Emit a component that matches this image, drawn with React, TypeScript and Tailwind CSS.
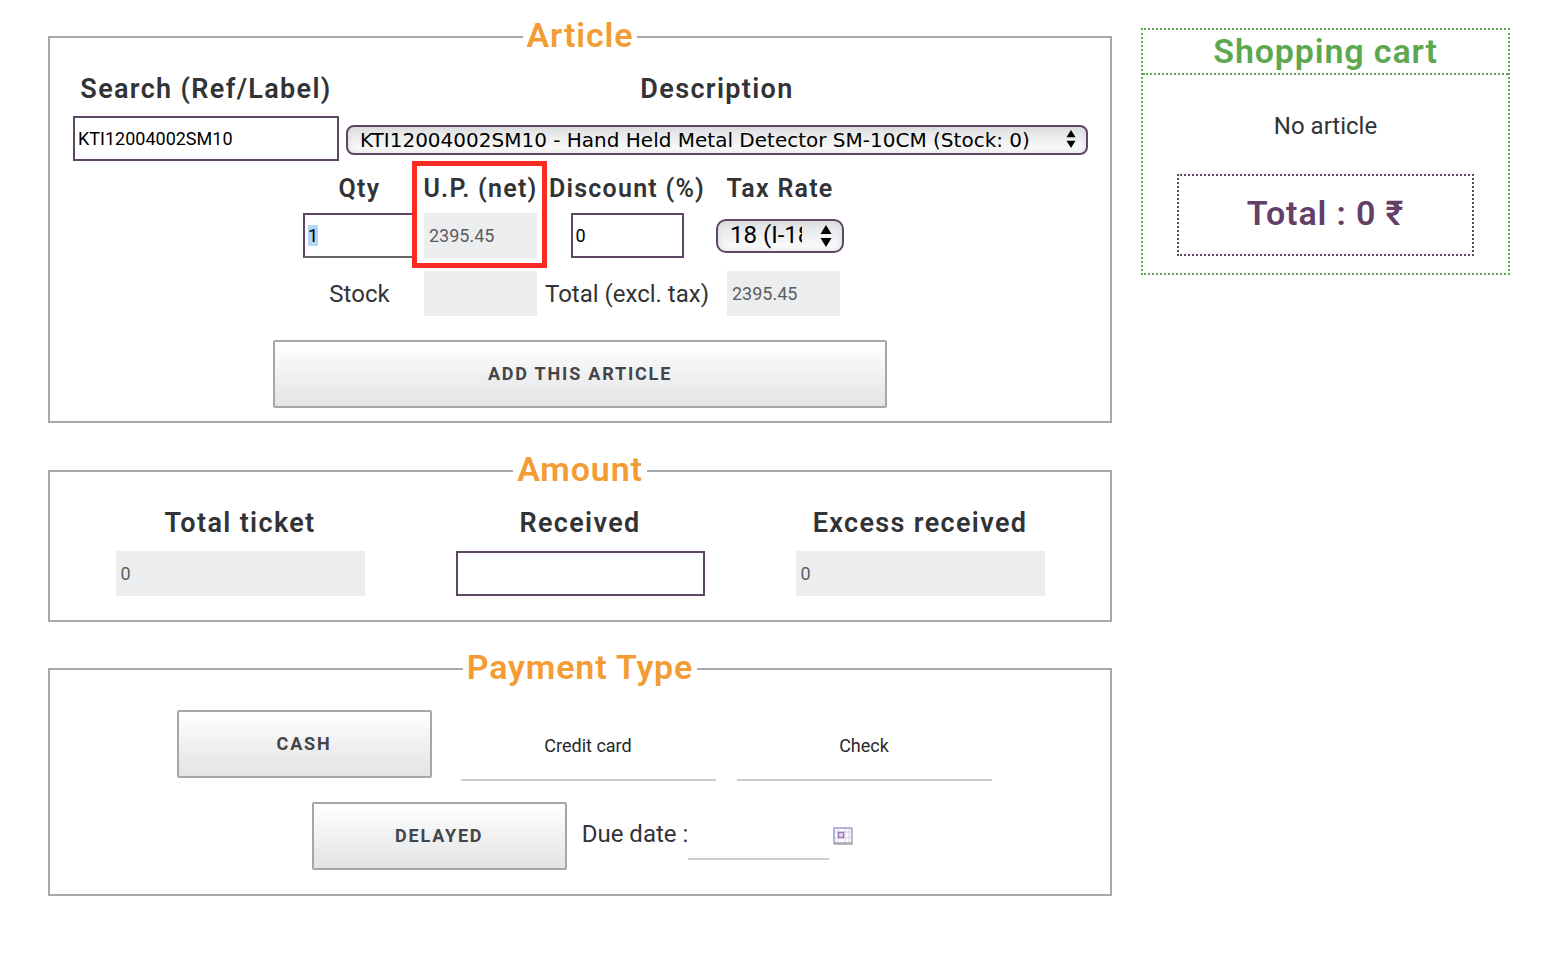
import clsx from 'clsx';
import { useEffect, useRef, useState } from 'react';
import type { ReactNode } from 'react';

const labelClass = 'whitespace-nowrap text-center text-[27px] font-semibold leading-8 tracking-wider';
const lineLabelClass = 'whitespace-nowrap text-center text-[25px] font-semibold leading-8 tracking-wider';
const inputClass = 'h-[45px] border-2 border-[#5f4664] bg-white px-[3px] text-lg text-black outline-none';
const disabledClass = 'h-[45px] border-2 border-[#ecedef] bg-[#ecedef] px-[3px] text-lg text-[#5c5d60]';

interface PanelProps {
  title: string;
  className?: string;
  children: ReactNode;
}

function Panel({ title, className, children }: PanelProps) {
  return (
    <fieldset className={clsx('min-w-0 border-2 border-[#a7a8a9]', className)}>
      <legend className="mx-auto px-1 pb-1 text-[34px] font-semibold leading-9 tracking-wide text-[#f39c34]">{title}</legend>
      {children}
    </fieldset>
  );
}

interface PosButtonProps {
  className?: string;
  children: ReactNode;
}

function PosButton({ className, children }: PosButtonProps) {
  return (
    <button
      type="button"
      className={clsx(
        'h-[68px] rounded-xs border-2 border-[#a5a6a8] bg-linear-to-b from-white to-[#e2e3e5] text-lg font-bold uppercase tracking-widest text-[#444548]',
        className,
      )}
    >
      {children}
    </button>
  );
}

function SelectArrows({ className }: { className?: string }) {
  return (
    <svg className={clsx('pointer-events-none absolute', className)} viewBox="0 0 12 22" fill="black" aria-hidden="true">
      <path d="M6 0l5.500 9H.5zM6 22l5.500-9H.5z" />
    </svg>
  );
}

function CalendarIcon() {
  return (
    <svg className="h-[18px] w-5" viewBox="0 0 20 18" fill="none" aria-hidden="true">
      <rect x="1" y="1" width="18" height="16" fill="#fdfdff" />
      <path d="M1 5h18M1 11h18M5 1v16M12 1v16M16 1v16" stroke="#d5d3e4" />
      <path d="M1 16h18" stroke="#b9bac1" strokeWidth="2" />
      <rect x="5.500" y="5.500" width="5" height="5" fill="#e9dff0" stroke="#9c7db5" strokeWidth="1.500" />
      <path d="M1 17V1h18" stroke="#989dd4" strokeWidth="1.500" />
      <path d="M1 17h18V1" stroke="#a3a5b0" strokeWidth="1.500" />
    </svg>
  );
}

function ArticlePanel() {
  const [search, setSearch] = useState('KTI12004002SM10');
  const [qty, setQty] = useState('1');
  const [discount, setDiscount] = useState('0');
  const qtyRef = useRef<HTMLInputElement>(null);

  useEffect(() => {
    qtyRef.current?.focus();
    qtyRef.current?.select();
  }, []);

  return (
    <Panel title="Article">
      <div className="grid grid-cols-[266px_1fr] gap-x-[7px] pl-[23px] pr-[22px] pt-4">
        <div className="flex flex-col gap-[11px]">
          <label htmlFor="search" className={labelClass}>
            Search (Ref/Label)
          </label>
          <input id="search" type="text" value={search} onChange={e => setSearch(e.target.value)} className={inputClass} />
        </div>
        <div className="flex flex-col gap-5">
          <label htmlFor="article" className={labelClass}>
            Description
          </label>
          <div className="relative">
            <select
              id="article"
              className="block h-[30px] w-full appearance-none rounded-lg border-2 border-[#5f4664] bg-linear-to-b from-[#dfe0e2] to-white pl-3 pr-8 font-['DejaVu_Sans',sans-serif] text-xl leading-6 text-black shadow-[inset_0_0_6px_#d5d6d8]"
            >
              <option>KTI12004002SM10 - Hand Held Metal Detector SM-10CM (Stock: 0)</option>
            </select>
            <SelectArrows className="right-3 top-[5px] h-[18px] w-[10px]" />
          </div>
        </div>
      </div>

      <div className="mt-3 flex justify-center pr-[13px]">
        <div className="grid grid-cols-[113px_115px_164px_128px] justify-items-center gap-x-[7px] gap-y-[13px]">
          <div className="flex flex-col gap-2">
            <label htmlFor="qty" className={lineLabelClass}>
              Qty
            </label>
            <input
              id="qty"
              ref={qtyRef}
              type="text"
              value={qty}
              onChange={e => setQty(e.target.value)}
              className={clsx(inputClass, 'w-[113px] border-b-[#666] selection:bg-[#b3d5f8] selection:text-black')}
            />
          </div>
          <div className="relative flex w-full flex-col items-center gap-2">
            <label htmlFor="price" className={lineLabelClass}>
              U.P. (net)
            </label>
            <input id="price" type="text" value="2395.45" disabled className={clsx(disabledClass, 'w-[113px]')} />
            <div className="pointer-events-none absolute -bottom-[10px] -left-[11px] -right-[9px] -top-3 border-5 border-[#f72b22]" />
          </div>
          <div className="flex flex-col items-center gap-2">
            <label htmlFor="discount" className={lineLabelClass}>
              Discount (%)
            </label>
            <input
              id="discount"
              type="text"
              value={discount}
              onChange={e => setDiscount(e.target.value)}
              className={clsx(inputClass, 'w-[113px]')}
            />
          </div>
          <div className="flex flex-col items-center gap-[14px]">
            <label htmlFor="tax" className={lineLabelClass}>
              Tax Rate
            </label>
            <div className="relative">
              <select
                id="tax"
                className="block h-[34px] w-32 appearance-none rounded-[10px] border-2 border-[#5f4664] bg-linear-to-b from-[#dfe0e2] to-white pb-0.5 pl-3 pr-10 text-2xl leading-7 text-black shadow-[inset_0_0_6px_#d5d6d8]"
              >
                <option>18 (I-18)</option>
              </select>
              <SelectArrows className="right-3 top-1.5 h-[22px] w-3" />
            </div>
          </div>

          <label htmlFor="stock" className="self-center text-2xl">
            Stock
          </label>
          <input id="stock" type="text" value="" disabled className={clsx(disabledClass, 'w-[113px]')} />
          <label htmlFor="total" className="self-center whitespace-nowrap text-2xl">
            Total (excl. tax)
          </label>
          <input id="total" type="text" value="2395.45" disabled className={clsx(disabledClass, 'mr-1 w-[113px] justify-self-end')} />
        </div>
      </div>

      <div className="mt-6 pb-[13px] text-center">
        <PosButton className="w-[58%]">Add this article</PosButton>
      </div>
    </Panel>
  );
}

function AmountPanel() {
  const [received, setReceived] = useState('');

  return (
    <Panel title="Amount" className="mt-7">
      <div className="grid grid-cols-3 px-5 pb-6 pt-4">
        <div className="flex flex-col items-center gap-3">
          <label htmlFor="ticket" className={labelClass}>
            Total ticket
          </label>
          <input id="ticket" type="text" value="0" disabled className={clsx(disabledClass, 'w-[249px]')} />
        </div>
        <div className="flex flex-col items-center gap-3">
          <label htmlFor="received" className={labelClass}>
            Received
          </label>
          <input
            id="received"
            type="text"
            value={received}
            onChange={e => setReceived(e.target.value)}
            className={clsx(inputClass, 'w-[249px]')}
          />
        </div>
        <div className="flex flex-col items-center gap-3">
          <label htmlFor="excess" className={labelClass}>
            Excess received
          </label>
          <input id="excess" type="text" value="0" disabled className={clsx(disabledClass, 'w-[249px]')} />
        </div>
      </div>
    </Panel>
  );
}

function PaymentPanel() {
  const flatButton = 'h-[71px] w-[255px] border-b-2 border-[#cccdd0] pt-0.5 text-lg text-[#27282b]';

  return (
    <Panel title="Payment Type" className="mt-[27px]">
      <div className="flex items-start justify-center pl-2 pt-[21px]">
        <PosButton className="mr-[29px] w-[255px]">Cash</PosButton>
        <button type="button" className={clsx(flatButton, 'mr-[21px]')}>
          Credit card
        </button>
        <button type="button" className={flatButton}>
          Check
        </button>
      </div>
      <div className="mt-[21px] flex items-center justify-center pb-6 pl-[5px]">
        <PosButton className="w-[255px]">Delayed</PosButton>
        <label htmlFor="due" className="ml-[15px] pb-1 text-2xl">
          Due date :
        </label>
        <input id="due" type="text" className="mb-[10px] h-12 w-[141px] self-end border-b-2 border-[#cccdd0] px-1 text-lg outline-none" />
        <button type="button" aria-label="Select a date" className="ml-1">
          <CalendarIcon />
        </button>
      </div>
    </Panel>
  );
}

function ShoppingCart() {
  return (
    <aside className="mt-[11px] self-start border-2 border-dotted border-[#5da455] text-center">
      <h2 className="border-b-2 border-dotted border-[#5da455] text-[34px] font-semibold leading-[43px] tracking-wide text-[#5da751]">Shopping cart</h2>
      <p className="mt-[35px] text-2xl">No article</p>
      <div className="mx-[34px] mb-[17px] mt-8 border-2 border-dotted border-[#644368] pb-5 pt-4 text-[34px] font-semibold leading-[42px] tracking-wide text-[#644069]">
        Total : 0 ₹
      </div>
    </aside>
  );
}

export default function App() {
  return (
    <div className="grid min-h-screen grid-cols-[1064fr_369fr] gap-x-[29px] bg-white pb-10 pl-12 pr-[50px] pt-[17px] font-['Roboto',sans-serif] text-[#323336]">
      <main>
        <ArticlePanel />
        <AmountPanel />
        <PaymentPanel />
      </main>
      <ShoppingCart />
    </div>
  );
}
